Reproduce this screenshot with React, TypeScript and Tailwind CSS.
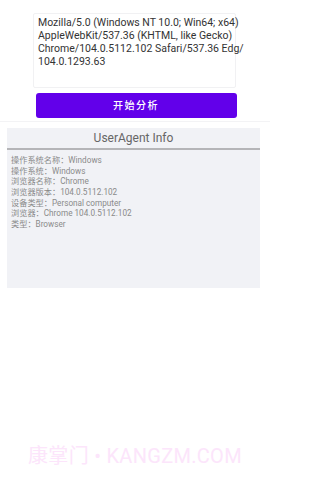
import React from "react";

const uaLines = [
  "Mozilla/5.0 (Windows NT 10.0; Win64; x64)",
  "AppleWebKit/537.36 (KHTML, like Gecko)",
  "Chrome/104.0.5112.102 Safari/537.36 Edg/",
  "104.0.1293.63",
];

const rows = [
  "操作系统名称：Windows",
  "操作系统：Windows",
  "浏览器名称：Chrome",
  "浏览器版本：104.0.5112.102",
  "设备类型：Personal computer",
  "浏览器：Chrome 104.0.5112.102",
  "类型：Browser",
];

export default function App() {
  return (
    <div
      className="w-[270px] h-[480px] bg-white flex flex-col relative overflow-hidden"
      style={{ fontFamily: 'Roboto, "Noto Sans CJK SC", sans-serif' }}
    >
      <div className="flex flex-col items-center pt-[13px] pb-[3px] border-b border-[#f3f3f5]">
        <div className="w-[203px] h-[75px] ml-[-1px] border border-[#f1f1f3] rounded-[2px] px-[4px] pt-[2px] text-[10.5px] leading-[13px] text-[#333] whitespace-nowrap">
          {uaLines.map((l) => (
            <div key={l}>{l}</div>
          ))}
        </div>
        <button className="mt-[5px] w-[201px] h-[25px] ml-[2px] rounded-[3px] bg-[#6200ea] text-white text-[10px] font-medium tracking-[1.5px] flex items-center justify-center">
          开始分析
        </button>
      </div>
      <div className="px-[7px] pt-[6px]">
        <div className="w-[253px] h-[160px] bg-[#f1f2f6] flex flex-col">
          <div className="h-[22px] flex items-center justify-center text-[12px] text-[#666] border-b-[2px] border-[#b5b5b8]">
            UserAgent Info
          </div>
          <div className="pt-[5px] pl-[4px] text-[8.2px] leading-[10.7px] text-[#8a8a8a]">
            {rows.map((r) => (
              <div key={r} className="h-[10.7px]">{r}</div>
            ))}
          </div>
        </div>
      </div>
      <div className="flex-1" />
      <div className="pb-[9px] flex justify-center text-[20px] text-[#fce5fb] tracking-[0.3px]">
        康掌门 • KANGZM.COM
      </div>
    </div>
  );
}
